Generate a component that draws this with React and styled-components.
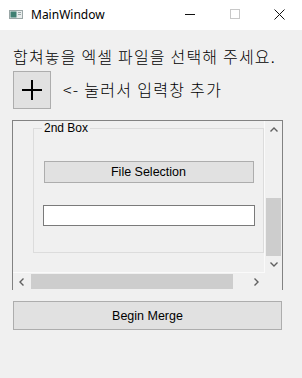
import React from 'react';
import styled, { createGlobalStyle } from "styled-components";

const GlobalStyle = createGlobalStyle`
  html, body {
    margin: 0;
    padding: 0;
    background: #f0f0f0;
  }
`;

export default function App() {
  return (
    <>
      <GlobalStyle />
      <Window>
        <TitleBar>
          <AppIcon viewBox="0 0 14 9">
            <rect x="0.5" y="0.5" width="13" height="8" fill="#e8ecec" stroke="#9aa6a6" />
            <rect x="1.5" y="1.5" width="6" height="6" fill="#3f7f72" />
            <rect x="9" y="2" width="3" height="1" fill="#9aa6a6" />
            <rect x="9" y="4" width="3" height="1" fill="#9aa6a6" />
          </AppIcon>
          <Title>MainWindow</Title>
          <WinButtons>
            <WinBtn>
              <svg width="10" height="10" viewBox="0 0 10 10">
                <line x1="0" y1="5.5" x2="10" y2="5.5" stroke="#111" strokeWidth="1" />
              </svg>
            </WinBtn>
            <WinBtn>
              <svg width="10" height="10" viewBox="0 0 10 10">
                <rect x="0.5" y="0.5" width="9" height="9" fill="none" stroke="#c8c8c8" strokeWidth="1" />
              </svg>
            </WinBtn>
            <WinBtn>
              <svg width="11" height="11" viewBox="0 0 11 11">
                <path d="M0.5 0.5 L10.5 10.5 M10.5 0.5 L0.5 10.5" stroke="#111" strokeWidth="1" />
              </svg>
            </WinBtn>
          </WinButtons>
        </TitleBar>

        <Body>
          <Guide>합쳐놓을 엑셀 파일을 선택해 주세요.</Guide>
          <AddRow>
            <PlusBtn>
              <svg width="22" height="22" viewBox="0 0 22 22">
                <path d="M11 1 V21 M1 11 H21" stroke="#000" strokeWidth="2" />
              </svg>
            </PlusBtn>
            <AddHint>&lt;- 눌러서 입력창 추가</AddHint>
          </AddRow>

          <ScrollArea>
            <Viewport>
              <GroupBox>
                <GroupTitle>2nd Box</GroupTitle>
                <FileBtn>File Selection</FileBtn>
                <PathInput />
              </GroupBox>
            </Viewport>
            <VScroll>
              <Arrow>
                <svg width="8" height="5" viewBox="0 0 8 5">
                  <path d="M0.5 4.5 L4 1 L7.5 4.5" fill="none" stroke="#606060" strokeWidth="1.4" />
                </svg>
              </Arrow>
              <VTrack>
                <VThumb />
              </VTrack>
              <Arrow>
                <svg width="8" height="5" viewBox="0 0 8 5">
                  <path d="M0.5 0.5 L4 4 L7.5 0.5" fill="none" stroke="#606060" strokeWidth="1.4" />
                </svg>
              </Arrow>
            </VScroll>
            <HScroll>
              <Arrow>
                <svg width="5" height="8" viewBox="0 0 5 8">
                  <path d="M4.5 0.5 L1 4 L4.5 7.5" fill="none" stroke="#606060" strokeWidth="1.4" />
                </svg>
              </Arrow>
              <HTrack>
                <HThumb />
              </HTrack>
              <Arrow>
                <svg width="5" height="8" viewBox="0 0 5 8">
                  <path d="M0.5 0.5 L4 4 L0.5 7.5" fill="none" stroke="#606060" strokeWidth="1.4" />
                </svg>
              </Arrow>
            </HScroll>
            <Corner />
          </ScrollArea>

          <MergeBtn>Begin Merge</MergeBtn>
        </Body>
      </Window>
    </>
  );
}

const Window = styled.div`
  width: 302px;
  height: 378px;
  display: flex;
  flex-direction: column;
  background: #f0f0f0;
  overflow: hidden;
`;

const TitleBar = styled.div`
  height: 30px;
  flex-shrink: 0;
  display: flex;
  align-items: center;
  background: #fff;
  padding-left: 9px;
`;

const AppIcon = styled.svg`
  width: 14px;
  height: 9px;
  margin-top: -2px;
`;

const Title = styled.span`
  margin-left: 8px;
  font-family: "Noto Sans", "Open Sans", sans-serif;
  font-size: 12px;
  color: #000;
  flex: 1;
  margin-top: -1px;
`;

const WinButtons = styled.div`
  display: flex;
  align-items: center;
  height: 100%;
`;

const WinBtn = styled.div`
  width: 45px;
  height: 100%;
  display: flex;
  align-items: center;
  justify-content: center;
  svg {
    margin-top: -2px;
  }
`;

const Body = styled.div`
  flex: 1;
  display: flex;
  flex-direction: column;
  padding: 0 19px 0 12px;
`;

const Guide = styled.div`
  margin-top: 16px;
  margin-left: 1px;
  height: 20px;
  line-height: 20px;
  font-family: "Noto Sans CJK KR", sans-serif;
  font-size: 16px;
  font-weight: 300;
  letter-spacing: 1.2px;
  color: #000;
  white-space: nowrap;
`;

const AddRow = styled.div`
  display: flex;
  align-items: center;
  margin-top: 5px;
  margin-left: 1px;
`;

const PlusBtn = styled.div`
  width: 38px;
  height: 38px;
  box-sizing: border-box;
  border: 1px solid #adadad;
  background: #e1e1e1;
  display: flex;
  align-items: center;
  justify-content: center;
`;

const AddHint = styled.span`
  margin-left: 12px;
  margin-top: -2px;
  font-family: "Noto Sans CJK KR", sans-serif;
  font-size: 16px;
  font-weight: 300;
  letter-spacing: 1.3px;
  color: #000;
`;

const ScrollArea = styled.div`
  margin-top: 11px;
  width: 271px;
  height: 170px;
  box-sizing: border-box;
  border: 1px solid #828282;
  display: grid;
  grid-template-columns: 1fr 17px;
  grid-template-rows: 1fr 17px;
`;

const Viewport = styled.div`
  overflow: hidden;
  background: #f0f0f0;
  border-right: 1px solid #fafafa;
  border-bottom: 1px solid #fafafa;
  padding: 7px 0 0 20px;
`;

const GroupBox = styled.div`
  position: relative;
  width: 231px;
  height: 125px;
  box-sizing: border-box;
  border: 1px solid #dcdcdc;
  display: flex;
  flex-direction: column;
  align-items: center;
  padding-top: 32px;
`;

const GroupTitle = styled.span`
  position: absolute;
  top: -8px;
  left: 8px;
  padding: 0 2px;
  background: #f0f0f0;
  font-family: "Liberation Sans", Arial, sans-serif;
  font-size: 12px;
  line-height: 14px;
  color: #000;
`;

const ButtonBase = styled.div`
  box-sizing: border-box;
  border: 1px solid #adadad;
  background: #e1e1e1;
  display: flex;
  align-items: center;
  justify-content: center;
  font-family: "Liberation Sans", Arial, sans-serif;
  font-size: 12.5px;
  color: #000;
`;

const FileBtn = styled(ButtonBase)`
  width: 210px;
  height: 22px;
`;

const PathInput = styled.div`
  margin-top: 22px;
  width: 212px;
  height: 21px;
  box-sizing: border-box;
  border: 1px solid #7a7a7a;
  background: #fff;
`;

const VScroll = styled.div`
  display: flex;
  flex-direction: column;
  background: #f0f0f0;
`;

const HScroll = styled.div`
  display: flex;
  background: #f0f0f0;
`;

const Arrow = styled.div`
  width: 17px;
  height: 17px;
  flex-shrink: 0;
  display: flex;
  align-items: center;
  justify-content: center;
`;

const VTrack = styled.div`
  flex: 1;
  display: flex;
  flex-direction: column;
  justify-content: flex-start;
  padding: 60px 1px 0 1px;
`;

const VThumb = styled.div`
  height: 58px;
  background: #cdcdcd;
`;

const HTrack = styled.div`
  flex: 1;
  display: flex;
  padding: 1px 0 1px 1px;
`;

const HThumb = styled.div`
  width: 202px;
  background: #cdcdcd;
`;

const Corner = styled.div`
  background: #f0f0f0;
`;

const MergeBtn = styled(ButtonBase)`
  margin-top: 11px;
  margin-left: 1px;
  width: 269px;
  height: 29px;
`;
